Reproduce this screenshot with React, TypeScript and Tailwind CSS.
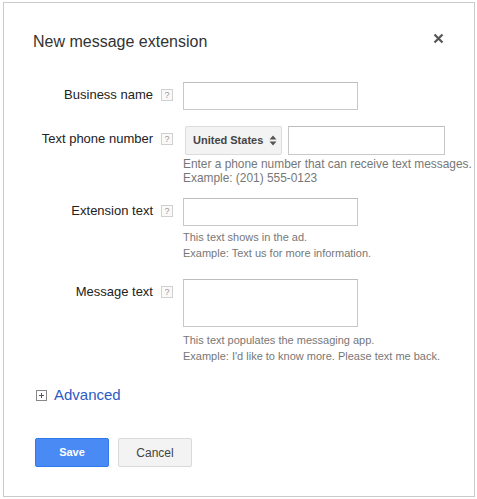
import React from "react";

function Help() {
  return (
    <span className="ml-2 mt-[7px] flex h-[12px] w-[12px] shrink-0 items-center justify-center border border-[#d0d0d0] bg-[#f9f9f9] text-[9px] leading-none text-[#999]">
      ?
    </span>
  );
}

function Label({ children }: { children: React.ReactNode }) {
  return (
    <div className="flex w-[169px] shrink-0 items-start justify-end">
      <span className="pt-[5px] text-[13px] leading-[16px] text-[#222]">{children}</span>
      <Help />
    </div>
  );
}

export default function App() {
  return (
    <div className="h-[499px] w-[477px] bg-white pl-[3px] pt-[2px]" style={{ fontFamily: '"Liberation Sans", Arial, sans-serif' }}>
      <div className="relative h-[495px] w-[472px] border border-[#cacaca] bg-white">
        <div className="flex items-center justify-between pl-[29px] pr-[30px] pt-[29px]">
          <span className="text-[16px] leading-[20px] text-[#333]">New message extension</span>
          <svg width="11" height="11" viewBox="0 0 11 11" className="-mt-[8px]">
            <path d="M1.5 1.5 L9.5 9.5 M9.5 1.5 L1.5 9.5" stroke="#555" strokeWidth="2.2" />
          </svg>
        </div>

        <div className="mt-[30px] flex flex-col">
          <div className="flex">
            <Label>Business name</Label>
            <div className="ml-[10px] h-[28px] w-[175px] border border-[#c8c8c8] border-t-[#bdbdbd] bg-white" />
          </div>

          <div className="mt-[16px] flex">
            <Label>Text phone number</Label>
            <div className="ml-[12px] flex flex-col">
              <div className="flex">
                <div className="flex h-[29px] w-[97px] items-center rounded-[2px] border border-[#dcdcdc] bg-[#f3f3f3] pl-[7px]">
                  <span className="text-[11px] font-bold text-[#444]">United States</span>
                  <svg width="8" height="11" viewBox="0 0 8 11" className="ml-[6px]">
                    <path d="M4 0.5 L7.5 4.5 L0.5 4.5 Z M4 10.5 L7.5 6.5 L0.5 6.5 Z" fill="#555" />
                  </svg>
                </div>
                <div className="ml-[6px] h-[29px] w-[157px] border border-[#c8c8c8] border-t-[#bdbdbd] bg-white" />
              </div>
              <div className="-ml-[2px] mt-[2px] whitespace-nowrap text-[11.9px] leading-[14px] text-[#777]">
                <div>Enter a phone number that can receive text messages.</div>
                <div>Example: (201) 555-0123</div>
              </div>
            </div>
          </div>

          <div className="mt-[13px] flex">
            <Label>Extension text</Label>
            <div className="ml-[10px] flex flex-col">
              <div className="h-[28px] w-[175px] border border-[#c8c8c8] border-t-[#bdbdbd] bg-white" />
              <div className="mt-[3px] whitespace-nowrap text-[11px] leading-[16px] text-[#777]">
                <div>This text shows in the ad.</div>
                <div>Example: Text us for more information.</div>
              </div>
            </div>
          </div>

          <div className="mt-[18px] flex">
            <Label>Message text</Label>
            <div className="ml-[10px] flex flex-col">
              <div className="h-[48px] w-[175px] border border-[#c8c8c8] border-t-[#bdbdbd] bg-white" />
              <div className="mt-[5px] whitespace-nowrap text-[11px] leading-[16px] text-[#777]">
                <div>This text populates the messaging app.</div>
                <div>Example: I'd like to know more. Please text me back.</div>
              </div>
            </div>
          </div>
        </div>

        <div className="ml-[32px] mt-[21px] flex items-center">
          <svg width="11" height="11" viewBox="0 0 11 11">
            <rect x="0.5" y="0.5" width="10" height="10" fill="white" stroke="#888" />
            <path d="M3 5.5 H8 M5.5 3 V8" stroke="#555" strokeWidth="1" />
          </svg>
          <span className="ml-[7px] text-[15px] leading-[20px] text-[#2d5bc4]">Advanced</span>
        </div>

        <div className="ml-[31px] mt-[33px] flex gap-[9px]">
          <div className="flex h-[29px] w-[74px] items-center justify-center rounded-[2px] border border-[#3079ed] bg-[#4a8af4] text-[11px] font-bold text-white">
            Save
          </div>
          <div className="flex h-[29px] w-[74px] items-center justify-center rounded-[2px] border border-[#d9d9d9] bg-[#f3f3f3] text-[12px] text-[#444]">
            Cancel
          </div>
        </div>
      </div>
    </div>
  );
}
